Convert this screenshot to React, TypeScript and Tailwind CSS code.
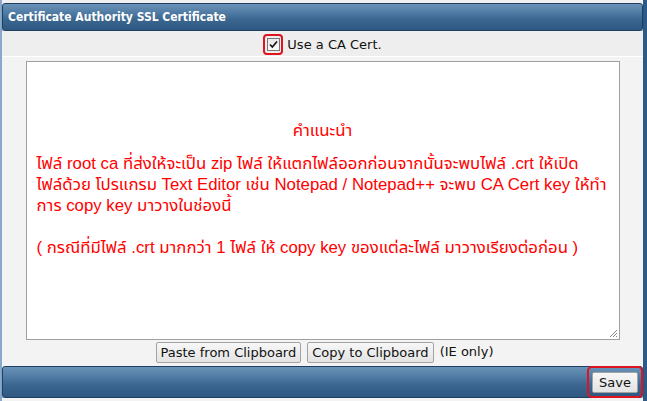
import React from "react";

const UI_FONT = { fontFamily: 'Tahoma, "DejaVu Sans", "Noto Sans", sans-serif' };
const HEAD_FONT = { fontFamily: '"DejaVu Sans Condensed", "DejaVu Sans", sans-serif' };
const THAI_FONT = { fontFamily: 'Tahoma, "Liberation Sans", "Noto Sans Thai", sans-serif' };

function Bar({ children }: { children?: React.ReactNode }) {
  return (
    <div className="flex h-full items-center rounded-[3px] border border-[#1d3f60] bg-[linear-gradient(to_bottom,#6b93b8_0%,#4f7aa3_35%,#3a6690_60%,#2e5881_100%)] shadow-[0_1px_1px_rgba(0,0,0,0.5)]">
      {children}
    </div>
  );
}

function ClipButton({ label }: { label: string }) {
  return (
    <button className="h-[21px] rounded-[2px] border border-[#a3a3a3] bg-[linear-gradient(to_bottom,#f7f7f7,#e3e3e3)] px-[4px] text-[13px] leading-[19px] text-[#111]">
      {label}
    </button>
  );
}

const LINES = [
  "ไฟล์ root ca ที่ส่งให้จะเป็น zip ไฟล์ ให้แตกไฟล์ออกก่อนจากนั้นจะพบไฟล์ .crt ให้เปิด",
  "ไฟล์ด้วย โปรแกรม Text Editor เช่น Notepad / Notepad++ จะพบ CA Cert key ให้ทำ",
  "การ copy key มาวางในช่องนี้",
];

export default function App() {
  return (
    <div
      className="flex h-[401px] w-[647px] border-l-2 border-r-[4px] border-l-[#86a9cc] border-r-[#2c5a88] bg-[#f1f1f1]"
      style={UI_FONT}
    >
      <div className="flex w-full flex-col">
        <div className="h-[3px]" />
        <div className="h-[28px]">
          <Bar>
            <span className="pl-[5px] text-[12px] font-semibold text-white" style={HEAD_FONT}>
              Certificate Authority SSL Certificate
            </span>
          </Bar>
        </div>

        <div className="flex h-[26px] items-center justify-center border-b border-white bg-[#eeeeee] pt-[2px]">
          <div className="flex items-center">
            <span className="flex h-[21px] w-[20px] items-center justify-center rounded-[4px] border-2 border-[#e0141e]">
              <span className="flex h-[13px] w-[13px] items-center justify-center border border-[#777] bg-[linear-gradient(to_bottom,#e8e8e8,#fdfdfd)]">
                <svg width="11" height="11" viewBox="0 0 11 11">
                  <path d="M2 5.5 L4.3 8 L9 2.5" fill="none" stroke="#111" strokeWidth="1.6" />
                </svg>
              </span>
            </span>
            <span className="ml-[4px] text-[13px] text-[#111]">Use a CA Cert.</span>
          </div>
        </div>

        <div className="flex flex-col items-center bg-[#f3f3f3] pt-[4px]">
          <div
            className="relative h-[279px] w-[594px] border border-[#a0a0a0] bg-white px-[10px] pt-[58px] text-[16.8px] leading-[21px] text-[#ff0000]"
            style={THAI_FONT}
          >
            <div className="text-center">คำแนะนำ</div>
            <div className="h-[12px]" />
            {LINES.map((l) => (
              <div key={l} className="whitespace-nowrap">
                {l}
              </div>
            ))}
            <div className="h-[21px]" />
            <div className="whitespace-nowrap">
              ( กรณีที่มีไฟล์ .crt มากกว่า 1 ไฟล์ ให้ copy key ของแต่ละไฟล์ มาวางเรียงต่อก่อน )
            </div>
            <svg className="absolute bottom-[1px] right-[1px]" width="10" height="10" viewBox="0 0 10 10">
              <path d="M9 2 L2 9 M9 5 L5 9 M9 8 L8 9" stroke="#888" strokeWidth="1" />
            </svg>
          </div>
          <div className="mt-[1px] flex h-[22px] items-center gap-[6px] pl-[4px]">
            <ClipButton label="Paste from Clipboard" />
            <ClipButton label="Copy to Clipboard" />
            <span className="text-[13px] text-[#111]">(IE only)</span>
          </div>
        </div>

        <div className="h-[3px] bg-[#f3f3f3]" />
        <div className="h-[32px]">
          <Bar>
            <div className="ml-auto mr-[-1px] flex h-[32px] items-center rounded-[5px] border-2 border-[#e0141e] px-[3px]">
              <button className="h-[21px] w-[46px] rounded-[2px] border border-[#a3a3a3] bg-[linear-gradient(to_bottom,#f7f7f7,#e3e3e3)] text-[13px] text-[#111]">
                Save
              </button>
            </div>
          </Bar>
        </div>
        <div className="flex-1 bg-[#f3f3f3]" />
      </div>
    </div>
  );
}
